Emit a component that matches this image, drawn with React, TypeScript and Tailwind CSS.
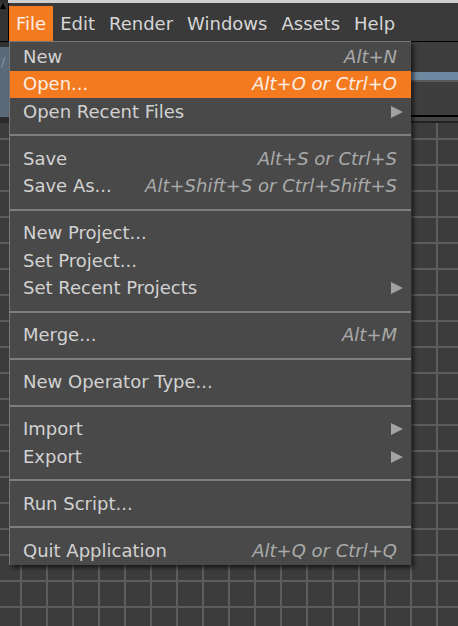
import { ReactNode } from 'react'

type Item =
    | { kind: 'sep' }
    | { kind: 'item'; label: string; shortcut?: string; sub?: boolean; active?: boolean }

const item = (label: string, shortcut?: string, extra?: { sub?: boolean; active?: boolean }): Item => ({
    kind: 'item',
    label,
    shortcut,
    ...extra,
})
const sep: Item = { kind: 'sep' }

const fileMenu: Item[] = [
    item('New', 'Alt+N'),
    item('Open...', 'Alt+O or Ctrl+O', { active: true }),
    item('Open Recent Files', undefined, { sub: true }),
    sep,
    item('Save', 'Alt+S or Ctrl+S'),
    item('Save As...', 'Alt+Shift+S or Ctrl+Shift+S'),
    sep,
    item('New Project...'),
    item('Set Project...'),
    item('Set Recent Projects', undefined, { sub: true }),
    sep,
    item('Merge...', 'Alt+M'),
    sep,
    item('New Operator Type...'),
    sep,
    item('Import', undefined, { sub: true }),
    item('Export', undefined, { sub: true }),
    sep,
    item('Run Script...'),
    sep,
    item('Quit Application', 'Alt+Q or Ctrl+Q'),
]

const menuBar = ['File', 'Edit', 'Render', 'Windows', 'Assets', 'Help']

function SubArrow() {
    return (
        <svg width="12" height="12" viewBox="0 0 12 12" className="shrink-0">
            <polygon points="0,0 12,6 0,12" fill="#a3a3a3" />
        </svg>
    )
}

function MenuRow({ it }: { it: Item }): ReactNode {
    if (it.kind === 'sep') {
        return (
            <div className="h-[19.5px] flex items-center">
                <div className="h-[2px] w-full bg-[#7e7e7e]" />
            </div>
        )
    }
    return (
        <div
            className={`h-[27.5px] flex items-center justify-between pl-[13px] ${
                it.sub ? 'pr-[8px]' : 'pr-[14px]'
            } ${it.active ? 'bg-[#f47a20] text-[#fbeee4]' : 'text-[#d2d2d2]'}`}
        >
            <span>{it.label}</span>
            {it.shortcut && (
                <span className={`italic ${it.active ? 'text-[#fbeee4]' : 'text-[#a9a9a9]'}`}>{it.shortcut}</span>
            )}
            {it.sub && <SubArrow />}
        </div>
    )
}

export default function App() {
    return (
        <div className="relative w-[458px] h-[626px] overflow-hidden bg-[#3c3c3c] font-['DejaVu_Sans',sans-serif] text-[18px] leading-none">
            {/* Top edge */}
            <div className="flex h-[3px]">
                <div className="w-[8px] bg-[#2e2e2e]" />
                <div className="flex-1 bg-[#cfcfcf]" />
            </div>

            {/* Menu bar */}
            <div className="flex h-[38px] bg-[#3a3a3a]">
                <div className="w-[9px] border-r border-black bg-[#343434] relative">
                    <div className="absolute left-0 top-0 w-0 h-0 border-l-[3px] border-r-[3px] border-b-[6px] border-l-transparent border-r-transparent border-b-black" />
                </div>
                <div className="flex pt-[3px] text-[#d6d6d6]">
                    {menuBar.map((m) => (
                        <div
                            key={m}
                            className={`h-[35px] px-[7px] flex items-center ${m === 'File' ? 'bg-[#f47a20] text-[#fbeee4]' : ''}`}
                        >
                            {m}
                        </div>
                    ))}
                </div>
            </div>

            {/* Toolbar strip behind the menu */}
            <div className="flex h-[82px] border-t border-black">
                <div className="w-[9px] flex flex-col">
                    <div className="h-[5px] bg-[#303030]" />
                    <div className="flex-1 bg-[#5b6978] text-[#8a96a2] text-[13px] pl-[1px] pt-[8px]">/</div>
                    <div className="h-[6px] bg-[#2b2b2b]" />
                </div>
                <div className="flex-1 flex flex-col">
                    <div className="h-[30px] bg-[#3d3d3d]" />
                    <div className="h-[8px] bg-[#6e89a1]" />
                    <div className="h-[2px] bg-[#5a5a5a]" />
                    <div className="h-[33px] bg-[#3e3e3e]" />
                    <div className="h-[2px] bg-black" />
                    <div className="flex-1 bg-[#454545] border-b-2 border-[#222]" />
                </div>
            </div>

            {/* Network grid */}
            <div className="h-[503px] bg-[#3c3c3c] bg-[linear-gradient(to_right,#5d5d5d_2px,transparent_2px),linear-gradient(to_bottom,#5d5d5d_2px,transparent_2px)] bg-[size:26px_26px] bg-[position:20px_15px]" />

            {/* File menu */}
            <div className="absolute left-[9px] top-[41px] w-[402px] bg-[#494949] border-l border-t border-[#787878] pt-[1px] shadow-[3px_3px_4px_rgba(0,0,0,0.55)]">
                {fileMenu.map((it, i) => (
                    <MenuRow key={i} it={it} />
                ))}
            </div>
        </div>
    )
}
